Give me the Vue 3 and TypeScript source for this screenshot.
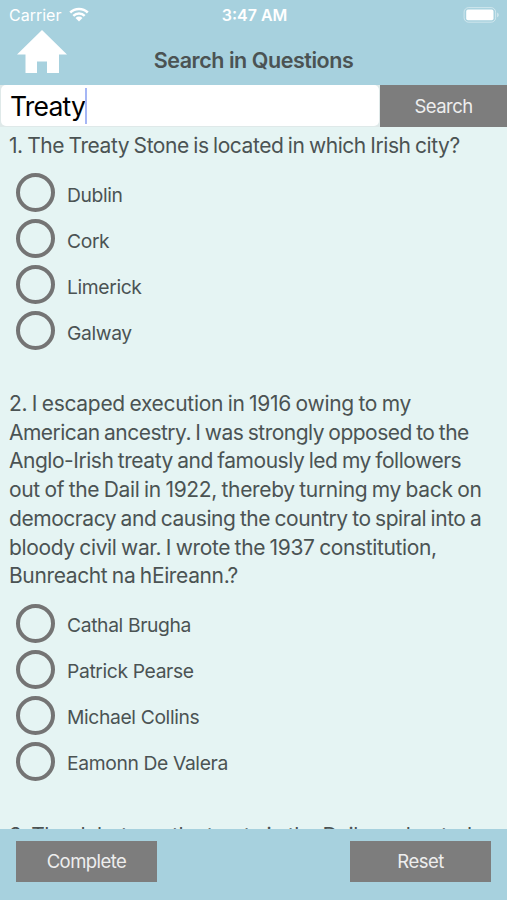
<script setup lang="ts">
import { ref } from 'vue'

interface Line {
  text: string
  spacing: number
}
interface Question {
  lines: Line[]
  options: string[]
}

const query = ref('Treaty')
const answers = ref<Record<number, string>>({})

const questions: Question[] = [
  {
    lines: [{ text: '1. The Treaty Stone is located in which Irish city?', spacing: -0.44 }],
    options: ['Dublin', 'Cork', 'Limerick', 'Galway'],
  },
  {
    lines: [
      { text: '2. I escaped execution in 1916 owing to my', spacing: -0.31 },
      { text: 'American ancestry. I was strongly opposed to the', spacing: -0.52 },
      { text: 'Anglo-Irish treaty and famously led my followers', spacing: -0.47 },
      { text: 'out of the Dail in 1922, thereby turning my back on', spacing: -0.34 },
      { text: 'democracy and causing the country to spiral into a', spacing: -0.45 },
      { text: 'bloody civil war. I wrote the 1937 constitution,', spacing: -0.36 },
      { text: 'Bunreacht na hEireann.?', spacing: -0.37 },
    ],
    options: ['Cathal Brugha', 'Patrick Pearse', 'Michael Collins', 'Eamonn De Valera'],
  },
  {
    lines: [{ text: '3. The debate on the treaty in the Dail was heated', spacing: -0.42 }],
    options: [],
  },
]

function reset() {
  answers.value = {}
}
</script>

<template>
  <div class="screen">
    <div class="status">
      <div class="carrier">
        <span>Carrier</span>
        <svg class="wifi" width="20" height="15" viewBox="0 0 20 15">
          <path d="M1.2 5.5a12.6 12.6 0 0 1 17.6 0M4.3 8.8a8.2 8.2 0 0 1 11.4 0" fill="none" stroke="#fff" stroke-width="2.5" />
          <path d="M6.5 11a5.1 5.1 0 0 1 7 0L10 14.5z" fill="#fff" />
        </svg>
      </div>
      <span class="time">3:47 AM</span>
      <svg class="battery" width="37" height="16" viewBox="0 0 37 16">
        <rect x="1.1" y=".6" width="31.5" height="14.6" rx="4.5" fill="none" stroke="#fff" stroke-opacity=".45" />
        <rect x="3.2" y="2.6" width="27.3" height="10.6" rx="1.8" fill="#fff" />
        <path d="M34.2 5.5c2 .8 2 4 0 4.8z" fill="#fff" fill-opacity=".5" />
      </svg>
    </div>

    <header class="header">
      <svg class="home" width="50" height="44" viewBox="0 0 50 44">
        <path d="M25 0 50 24.5H42V43H30V31.5H20V43H8.5V24.5H0z" fill="#fff" />
      </svg>
      <h1>Search in Questions</h1>
    </header>

    <div class="search">
      <div class="field"><span>{{ query }}</span><i class="caret"></i></div>
      <button class="btn go">Search</button>
    </div>

    <main class="list">
      <section v-for="(q, i) in questions" :key="i" class="question">
        <div class="prompt">
          <div v-for="l in q.lines" :key="l.text"><span :style="{ letterSpacing: l.spacing + 'px' }">{{ l.text }}</span></div>
        </div>
        <div v-if="q.options.length" class="options">
          <label v-for="o in q.options" :key="o" class="option" @click="answers[i] = o">
            <span class="ring" :class="{ on: answers[i] === o }"></span>
            <span class="name">{{ o }}</span>
          </label>
        </div>
      </section>
    </main>

    <footer class="footer">
      <button class="btn">Complete</button>
      <button class="btn" @click="reset">Reset</button>
    </footer>
  </div>
</template>

<style>
body {
  margin: 0;
  overflow: hidden;
}
</style>

<style scoped>
.screen {
  width: 507px;
  height: 900px;
  display: flex;
  flex-direction: column;
  background: #e5f4f3;
  font-family: Inter, "Liberation Sans", sans-serif;
  color: #4b5353;
  overflow: hidden;
}
.status {
  height: 30px;
  flex: none;
  display: grid;
  grid-template-columns: 1fr auto 1fr;
  align-items: center;
  padding: 0 7px 0 9px;
  background: #a7d1de;
  color: #fff;
  font-size: 16px;
}
.carrier {
  display: flex;
  align-items: center;
  gap: 8px;
}
.wifi {
  margin-top: -2px;
}
.time {
  font-weight: 600;
  font-size: 16px;
}
.battery {
  justify-self: end;
}
.header {
  height: 55px;
  flex: none;
  display: grid;
  grid-template-columns: 67px 1fr 67px;
  background: #a7d1de;
}
.home {
  margin-left: 17px;
}
h1 {
  margin: 0;
  padding-top: 15px;
  text-align: center;
  font-size: 21.5px;
  line-height: 30px;
  font-weight: 600;
  letter-spacing: -0.45px;
}
.search {
  height: 42px;
  flex: none;
  display: flex;
  background: #dfe9e9;
}
.field {
  flex: 1;
  display: flex;
  align-items: center;
  margin: 0 1px 1px;
  padding-left: 9px;
  border-radius: 5px;
  background: #fff;
  color: #000;
  font-size: 26.5px;
  letter-spacing: -0.8px;
}
.caret {
  width: 2px;
  height: 36px;
  background: #a5b6f5;
}
.btn {
  width: 141px;
  height: 41px;
  border: 0;
  padding: 0 0 1px;
  background: #7d7d7d;
  color: #eee;
  font: 18.5px/24px Inter, "Liberation Sans", sans-serif;
  letter-spacing: -0.55px;
}
.btn.go {
  width: 127px;
  height: 42px;
}
.list {
  flex: 1;
  min-height: 0;
  overflow: hidden;
  padding: 5px 9px 0;
}
.question:last-child {
  padding-top: 2px;
}
.prompt {
  font-size: 21px;
  line-height: 28.75px;
  white-space: nowrap;
  word-spacing: -1px;
}
.options {
  padding: 9px 0 36px 7px;
}
.option {
  height: 46px;
  display: flex;
  align-items: center;
  gap: 12px;
  font-size: 19.3px;
  letter-spacing: -0.37px;
}
.ring {
  box-sizing: border-box;
  width: 39px;
  height: 39px;
  border: 4px solid #747474;
  border-radius: 50%;
}
.ring.on {
  background: radial-gradient(#747474 45%, transparent 48%);
}
.name {
  padding-top: 4px;
}
.footer {
  height: 71px;
  flex: none;
  box-sizing: border-box;
  display: flex;
  justify-content: space-between;
  padding: 12px 16px 0;
  background: #a7d1de;
}
</style>
